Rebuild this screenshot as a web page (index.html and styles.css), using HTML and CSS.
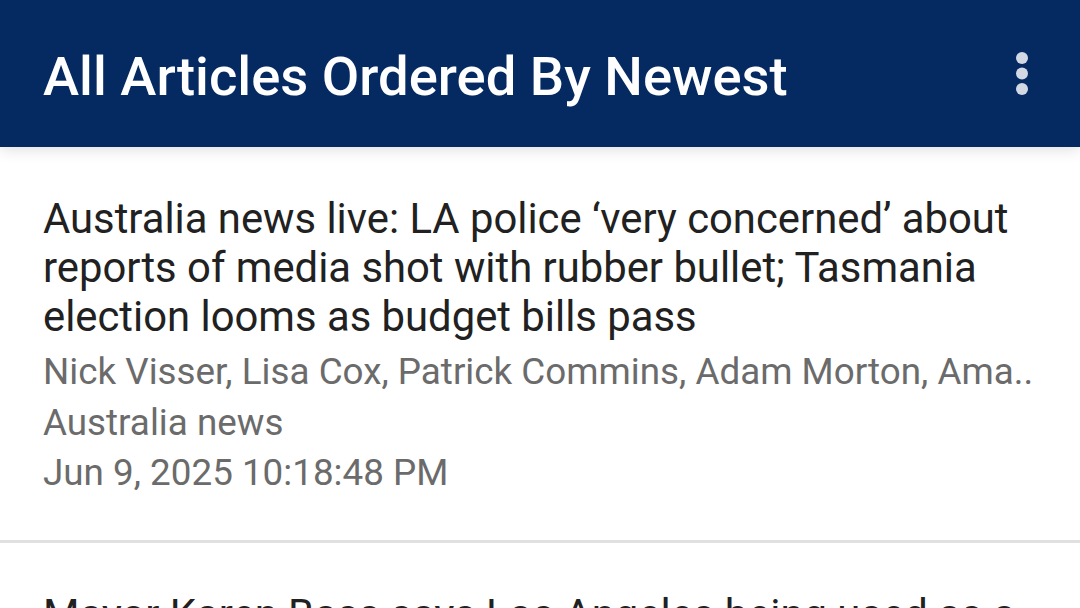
FILE: index.html
```html
<!DOCTYPE html>
<html>
<head>
<meta charset="utf-8">
<link rel="stylesheet" href="styles.css">
</head>
<body>
<div class="app">
  <header class="topbar">
    <h1 class="topbar-title">All Articles Ordered By Newest</h1>
    <button class="menu-btn" aria-label="More options">
      <svg width="12" height="44" viewBox="0 0 12 44"><circle cx="6" cy="6" r="6"/><circle cx="6" cy="21.5" r="6"/><circle cx="6" cy="37" r="6"/></svg>
    </button>
  </header>
  <main class="list">
    <article class="item">
      <h2 class="item-title">Australia news live: LA police ‘very concerned’ about reports of media shot with rubber bullet; Tasmania election looms as budget bills pass</h2>
      <p class="meta meta-authors">Nick Visser, Lisa Cox, Patrick Commins, Adam Morton, Ama..</p>
      <p class="meta">Australia news</p>
      <p class="meta">Jun 9, 2025 10:18:48 PM</p>
    </article>
    <article class="item">
      <h2 class="item-title">Mayor Karen Bass says Los Angeles being used as a test case for Trump's federal overreach</h2>
    </article>
  </main>
</div>
</body>
</html>
```
FILE: styles.css
```css
* { box-sizing: border-box; }
html, body { margin: 0; padding: 0; }
body {
  width: 1080px;
  height: 608px;
  overflow: hidden;
  background: #ffffff;
  font-family: Roboto, "Noto Sans", sans-serif;
}
.app { display: flex; flex-direction: column; height: 608px; }
.topbar {
  position: relative;
  z-index: 2;
  height: 147px;
  flex: none;
  background: #052961;
  display: flex;
  align-items: center;
  justify-content: space-between;
  padding: 6px 52px 0 43px;
  box-shadow: 0 3px 14px rgba(0,0,0,0.12);
}
.topbar-title {
  margin: 0;
  color: #ffffff;
  font-weight: 500;
  font-size: 54.4px;
  line-height: 56px;
  letter-spacing: 0;
}
.menu-btn {
  background: none;
  border: 0;
  padding: 0;
  display: flex;
  margin-top: -6px;
}
.menu-btn svg { fill: #d3d9e4; display: block; }
.list { flex: 1; overflow: hidden; }
.item {
  padding: 47px 43px 41px;
  border-bottom: 3px solid #e0e0e0;
}
.item-title {
  margin: 0;
  font-weight: 400;
  font-size: 41.8px;
  line-height: 49px;
  color: #212121;
}
.meta {
  margin: 0;
  font-size: 36.8px;
  line-height: 50.5px;
  color: #6b6b6b;
  white-space: nowrap;
  overflow: hidden;
}
.meta-authors { margin-top: 6px; }
```
